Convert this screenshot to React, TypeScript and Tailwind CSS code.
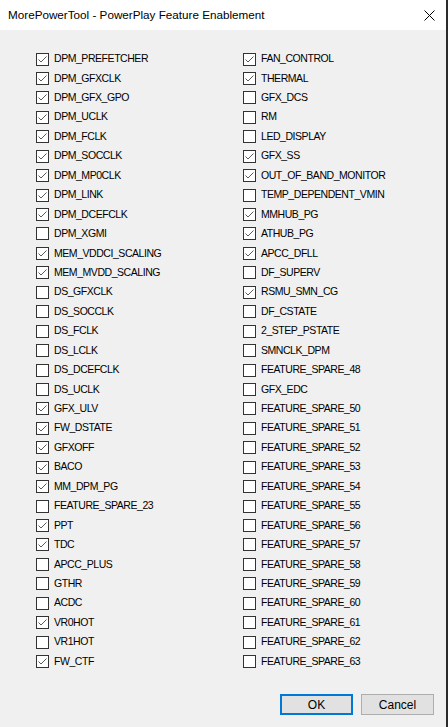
const left: [string, boolean][] = [
  ["DPM_PREFETCHER", true],
  ["DPM_GFXCLK", true],
  ["DPM_GFX_GPO", true],
  ["DPM_UCLK", true],
  ["DPM_FCLK", true],
  ["DPM_SOCCLK", true],
  ["DPM_MP0CLK", true],
  ["DPM_LINK", true],
  ["DPM_DCEFCLK", true],
  ["DPM_XGMI", false],
  ["MEM_VDDCI_SCALING", true],
  ["MEM_MVDD_SCALING", true],
  ["DS_GFXCLK", false],
  ["DS_SOCCLK", false],
  ["DS_FCLK", false],
  ["DS_LCLK", false],
  ["DS_DCEFCLK", false],
  ["DS_UCLK", false],
  ["GFX_ULV", true],
  ["FW_DSTATE", true],
  ["GFXOFF", true],
  ["BACO", true],
  ["MM_DPM_PG", true],
  ["FEATURE_SPARE_23", false],
  ["PPT", true],
  ["TDC", true],
  ["APCC_PLUS", false],
  ["GTHR", false],
  ["ACDC", false],
  ["VR0HOT", true],
  ["VR1HOT", false],
  ["FW_CTF", true],
];

const right: [string, boolean][] = [
  ["FAN_CONTROL", true],
  ["THERMAL", true],
  ["GFX_DCS", false],
  ["RM", false],
  ["LED_DISPLAY", false],
  ["GFX_SS", true],
  ["OUT_OF_BAND_MONITOR", true],
  ["TEMP_DEPENDENT_VMIN", false],
  ["MMHUB_PG", true],
  ["ATHUB_PG", true],
  ["APCC_DFLL", true],
  ["DF_SUPERV", false],
  ["RSMU_SMN_CG", true],
  ["DF_CSTATE", false],
  ["2_STEP_PSTATE", false],
  ["SMNCLK_DPM", false],
  ["FEATURE_SPARE_48", false],
  ["GFX_EDC", false],
  ...Array.from({ length: 14 }, (_, i): [string, boolean] => ["FEATURE_SPARE_" + (50 + i), false]),
];

function Box({ checked }: { checked: boolean }) {
  return (
    <span className="w-[13px] h-[13px] border border-[#333333] bg-white shrink-0 flex items-center justify-center">
      {checked && (
        <svg width="11" height="11" viewBox="0 0 11 11">
          <path d="M1.5 5.5 L4 8 L9.5 2.5" fill="none" stroke="#5a5a5a" strokeWidth="1" />
        </svg>
      )}
    </span>
  );
}

function Column({ items, width }: { items: [string, boolean][]; width: string }) {
  return (
    <div className={"flex flex-col " + width}>
      {items.map(([name, on]) => (
        <label key={name} className="h-[19.45px] flex items-center gap-[5px] text-[10.5px] tracking-[-0.45px] text-black">
          <Box checked={on} />
          <span>{name}</span>
        </label>
      ))}
    </div>
  );
}

export default function App() {
  return (
    <div className="w-[448px] h-[727px] flex bg-[#f0f0f0] font-['Liberation_Sans',Arial,sans-serif]">
      <div className="flex-1 flex flex-col">
        <div className="h-[30px] bg-white flex items-center justify-between pl-[8px] pr-[11px]">
          <span className="text-[11.7px] text-black">MorePowerTool - PowerPlay Feature Enablement</span>
          <svg width="11" height="11" viewBox="0 0 11 11">
            <path d="M0.5 0.5 L10.5 10.5 M10.5 0.5 L0.5 10.5" stroke="#000" strokeWidth="1" />
          </svg>
        </div>
        <div className="flex pt-[19.3px] pl-[36px]">
          <Column items={left} width="w-[207px]" />
          <Column items={right} width="flex-1" />
        </div>
        <div className="flex justify-end gap-[8px] pr-[12px] mt-auto mb-[12px]">
          <button className="w-[73px] h-[21px] bg-[#e1e1e1] border-2 border-[#0078d7] text-[12px] text-black">OK</button>
          <button className="w-[73px] h-[21px] bg-[#e1e1e1] border border-[#adadad] text-[12px] text-black">Cancel</button>
        </div>
      </div>
      <div className="w-[2px] bg-[#2b2b2b]" />
    </div>
  );
}
